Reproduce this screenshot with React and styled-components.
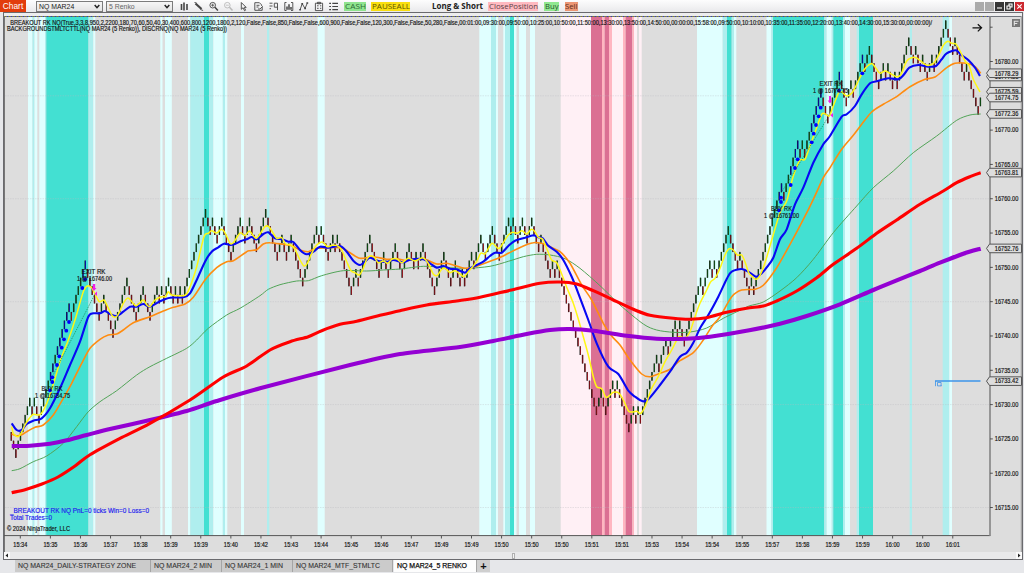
import React from "react";
import styled, { createGlobalStyle } from "styled-components";

const HEADER_TEXT =
  "_BREAKOUT RK NQ(True,3,3,8,950,2,2200,180,70,60,50,40,30,400,600,800,1200,1800,2,120,False,False,850,False,False,600,900,False,False,120,300,False,False,50,280,False,00:01:00,09:30:00,09:50:00,10:25:00,10:50:00,11:50:00,13:30:00,13:50:00,14:50:00,00:00:00,15:58:00,09:50:00,10:10:00,10:35:00,11:35:00,12:20:00,13:40:00,14:30:00,15:30:00,00:00:00)/";

const COLORS = {
  light: "#e0ffff",
  pale: "#afeeee",
  turq: "#43e0d2",
  blush: "#fff0f5",
  pink: "#ffb6c1",
  violet: "#db7093",
};

// background bands: [from, to, color]
const bands = [
  [28, 32.5, "light"], [32.5, 34.5, "pale"], [34.5, 37.3, "light"],
  [39.3, 45, "light"], [45, 46.3, "pale"], [46.3, 88.5, "turq"], [88.5, 93.3, "pale"], [93.3, 95.3, "light"],
  [160.3, 162.5, "light"], [165, 171.8, "light"],
  [188, 190.3, "light"], [190.3, 204, "pale"], [204, 209, "turq"], [209, 213.3, "pale"],
  [213.3, 222.8, "light"], [222.8, 225, "pale"], [225, 227.3, "light"],
  [241, 244, "light"], [267, 269.3, "pale"], [317.6, 324.7, "light"],
  [479.3, 491, "light"], [491, 496, "pale"], [496, 498, "light"],
  [503.3, 505, "light"], [505, 510, "pale"], [510, 514, "turq"], [514, 516.5, "light"],
  [519, 526, "light"], [530, 535, "light"],
  [560.7, 591, "blush"], [591, 602, "violet"], [602, 604.7, "pink"], [604.7, 609, "violet"],
  [609, 612, "pink"], [612, 623, "blush"], [623, 625.7, "pink"], [625.7, 632.3, "violet"],
  [632.3, 634, "pink"], [634, 637, "blush"], [639, 641.7, "blush"],
  [697, 722.7, "light"], [722.7, 727, "pale"], [727, 731.7, "turq"], [731.7, 734, "pale"], [734, 736.3, "light"],
  [766.5, 771.3, "light"], [771.3, 773, "pale"], [773, 824.3, "turq"], [824.3, 826.7, "pale"],
  [826.7, 831.7, "light"], [831.7, 833.3, "pale"], [833.3, 843, "turq"], [843, 845, "pale"],
  [845, 850, "light"], [856.7, 859, "pale"], [859, 873, "turq"],
  [909.7, 912, "pale"], [942.7, 949.3, "pale"], [949.3, 952, "light"],
];

// renko turning points, in bricks
const swings = [
  9, 7, 13, 12, 13, 11, 24, 23, 29, 23, 25, 21, 27, 23, 26, 23, 26, 25, 26, 25, 27, 25, 26, 25, 26, 25,
  35, 33, 34, 32, 34, 30, 34, 32, 34, 31, 35, 30, 32, 30, 32, 27, 33, 32, 33, 30, 32, 31, 32, 26, 28, 27,
  32, 28, 30, 28, 31, 28, 31, 29, 30, 29, 31, 26, 30, 27, 29, 27, 28, 27, 30, 29, 32, 30, 33, 30,
  34, 33, 34, 32, 34, 32, 34, 31, 32, 28, 29, 28, 29, 12, 14, 12, 15, 14, 15, 10, 12, 11, 12, 11,
  18, 17, 20, 19, 22, 21, 22, 20, 27, 26, 29, 28, 29, 28, 33, 29, 30, 26, 27, 26,
  38, 37, 43, 42, 43, 42, 49, 46, 51, 48, 50, 49, 53, 52, 54, 50, 52, 51, 52, 50, 51, 50,
  55, 53, 54, 52, 53, 51, 53, 52, 57, 54, 55, 51, 52, 47, 48,
];

const signalBars = [17, 18, 20, 21, 22, 23, 24, 25, 31, 32, 332, 333, 337, 339, 340, 346, 347, 348, 349, 350, 358, 368];

const buildBars = () => {
  const bars = [{ level: swings[0], up: false }];
  for (let i = 1; i < swings.length; i++) {
    const up = swings[i] > swings[i - 1];
    let level = swings[i - 1];
    while (level !== swings[i]) {
      level += up ? 1 : -1;
      bars.push({ level, up });
    }
  }
  return bars;
};

const bars = buildBars();
const BRICK = 8.577;
const barStep = (980.4 - 11.2) / (bars.length - 1);

// every curve is a list of [originX, originY, points], points in thirds of a pixel
const curves = {
  green: [
    [0, 200, "35,812 60,806 100,785 140,768 190,730 230,680 265,635 300,605 350,572 410,525 450,500 500,475 560,445 590,420 625,385 680,345 720,325"],
    [250, 200, "30,287 55,268 90,254 140,243 175,242 215,227 280,212 350,213 400,210 450,207 520,199 580,202 650,205 720,199 775,184"],
    [460, 200, "190,170 230,163 270,165 315,176 360,205 420,257 480,315 550,372 590,390 640,397 690,396 740,384 790,355 850,326"],
    [680, 16, "210,869 250,858 300,825 350,785 400,730 460,650 530,570 580,515 640,465 700,410 770,360 830,313 870,297 902,294"],
  ],
  orange: [
    [0, 200, "35,702 50,707 65,704 80,695 105,682 130,675 160,645 190,595 215,550 245,490 270,445 300,418 325,405 350,402 370,390 400,368 450,350 490,333 520,322 555,312 580,292 615,240 650,203 680,185 700,182 740,155"],
    [250, 200, "0,152 20,149 40,132 60,128 100,133 125,137 150,150 175,155 200,145 270,143 295,155 330,175 370,170 410,178 440,176 470,182 490,178 525,178 560,192 590,190 640,204 665,203 690,195 730,180 760,168"],
    [460, 200, "145,160 185,140 220,128 245,130 265,138 300,155 330,190 365,255 395,300 430,370 455,408 480,435 510,480 545,522 570,530 600,520 630,508 660,482 700,458 730,420 755,380 780,350"],
    [680, 16, "155,842 185,822 225,820 250,808 290,755 330,685 370,610 400,550 430,485 450,455 485,400 520,358 545,325 575,288 610,265 650,242 690,212 735,190 765,183 800,155 825,142 860,142 885,152 902,172"],
  ],
  blue: [
    [0, 200, "35,670 50,690 65,690 80,672 100,662 125,655 150,625 180,565 210,495 240,425 265,350 280,340 300,340 315,333 330,342 350,348 370,335 390,320 410,320 430,312 450,320 480,304 510,293 550,292 570,280 590,240 615,185 635,155 655,142 672,131 690,135 705,132 725,122 740,118"],
    [250, 200, "5,111 20,118 40,102 55,97 75,115 95,118 115,125 130,126 150,150 170,163 190,155 210,140 235,143 270,138 290,155 310,182 330,195 345,185 360,173 385,183 410,186 430,180 460,187 480,179 520,178 540,190 560,203 580,198 600,206 620,208 645,218 660,205 680,195 700,185 720,168 735,158 755,158"],
    [460, 200, "145,138 165,122 195,113 220,106 235,112 248,115 265,137 290,155 310,180 335,230 355,280 385,360 410,430 445,500 475,522 505,572 525,590 548,604 565,598 600,555 630,515 660,470 680,458 700,428 720,385 745,345 775,290 800,237 815,215 845,207 868,217"],
    [680, 16, "228,782 245,772 262,752 280,725 300,670 320,640 345,565 370,515 400,440 430,385 450,360 485,302 500,295 525,270 545,235 570,202 590,196 625,187 655,190 670,178 688,155 715,147 745,152 768,150 785,130 800,112 828,103 845,118 865,132 885,155 900,180"],
  ],
  yellow: [
    [0, 200, "35,680 40,700 54,710 63,700 75,675 88,655 100,643 118,645 130,632 150,585 180,485 205,420 228,350 250,275 262,258 275,264 285,282 298,305 312,300 322,318 335,345 345,352 355,343 370,310 384,294 398,308 408,318 420,308 430,300 440,314 450,320 465,300 485,290 497,290 505,275 515,285 555,286 570,260 590,200 612,110 625,100 635,92 650,99 664,88 676,100 690,130 700,128 712,110 722,98 735,107 748,93"],
    [250, 200, "10,107 19,115 30,102 45,80 56,80 70,100 80,115 95,113 107,132 122,135 135,148 150,180 162,198 172,190 185,160 200,135 217,126 232,140 247,136 262,137 275,150 290,185 303,212 315,218 328,225 340,205 350,178 362,167 373,172 385,188 400,183 413,190 425,178 440,176 455,188 475,175 495,183 518,173 535,190 550,222 562,226 575,208 585,205 600,218 615,212 630,222 642,230 655,215 668,200 680,185 692,160 705,162 715,145 727,130 740,142 748,145"],
    [460, 200, "132,125 145,105 158,97 172,100 186,92 200,102 214,88 225,95 235,112 248,118 262,150 275,180 290,188 305,222 320,262 340,310 360,375 385,465 400,530 410,560 425,566 438,592 450,585 460,577 475,578 490,600 505,632 515,636 530,634 542,640 555,620 575,565 595,530 615,485 635,450 655,412 665,411 676,414 690,395 705,350 720,310 740,270 752,245 765,235 780,205 795,165 808,146 820,150 832,165 845,165 856,188 866,218"],
    [680, 16, "215,780 228,790 240,778 255,740 270,690 300,590 320,555 340,480 360,433 375,430 390,390 410,335 425,295 435,293 448,300 460,270 475,232 485,228 500,240 515,232 530,205 550,165 565,148 577,143 590,160 600,172 615,165 630,172 650,182 663,175 680,135 695,125 708,125 722,135 735,145 748,148 762,140 775,120 790,88 803,76 815,82 828,84 840,105 855,135 868,150 880,190 900,228"],
  ],
  purple: [
    [0, 200, "35,738 90,737 150,731 200,721 260,705 330,687 450,660 560,633 650,603 780,565 1050,495 1200,462"],
    [460, 200, "0,441 100,423 200,402 270,390 330,387 400,392 500,407 590,416 680,416 750,410 868,391"],
    [680, 16, "300,923 380,900 480,865 580,822 650,793 720,765 780,740 850,713 902,698"],
  ],
  red: [
    [0, 200, "35,878 75,869 126,852 174,831 225,798 270,764 360,715 450,670 570,600 670,531 740,498"],
    [250, 200, "60,450 120,425 175,410 215,392 270,373 320,364 390,346 450,332 530,315 620,303"],
    [460, 200, "60,292 150,271 240,250 300,246 350,252 400,272 460,300 520,328 570,346 640,355 690,358 740,353 800,337 860,325"],
    [680, 16, "250,870 290,855 350,825 410,785 460,745 530,697 590,652 650,612 720,565 790,525 830,500 870,482 902,470"],
  ],
};

const curvePath = (segments) => {
  const pts = segments.flatMap(([ox, oy, list]) =>
    list.split(" ").map((pair) => {
      const [x, y] = pair.split(",").map(Number);
      return [ox + x / 3, oy + y / 3];
    })
  );
  let d = `M${pts[0][0].toFixed(1)} ${pts[0][1].toFixed(1)}`;
  for (let i = 0; i < pts.length - 1; i++) {
    const p0 = pts[i - 1] || pts[i];
    const p1 = pts[i];
    const p2 = pts[i + 1];
    const p3 = pts[i + 2] || p2;
    const c = [
      p1[0] + (p2[0] - p0[0]) / 7,
      p1[1] + (p2[1] - p0[1]) / 7,
      p2[0] - (p3[0] - p1[0]) / 7,
      p2[1] - (p3[1] - p1[1]) / 7,
      p2[0],
      p2[1],
    ].map((n) => n.toFixed(1));
    d += `C${c.join(" ")}`;
  }
  return d;
};

const dots = [
  [50, 390.3], [52.3, 382], [52.3, 377.3], [57, 365], [59.3, 356.3], [61.7, 347.7], [64, 339.3], [66.3, 330.7],
  [69, 322], [82.3, 288], [85, 279.3], [779, 210.3], [781, 202], [781, 197.7], [790.7, 185], [795, 168],
  [797.7, 159.3], [811.7, 142.3], [813.7, 133.7], [816, 125], [818.7, 116.3], [820.7, 107.7], [839, 90.7], [862.3, 73.3],
];

const tradeNotes = [
  { x: 93.5, y: 274.4, w: 24, text: "EXIT RK" },
  { x: 94.5, y: 281, w: 35, text: "1 @ 16746.00" },
  { x: 52, y: 391.2, w: 21, text: "BUY RK" },
  { x: 52.5, y: 397.7, w: 35, text: "1 @ 16734.75" },
  { x: 831, y: 86, w: 23, text: "EXIT RK" },
  { x: 830.5, y: 92.5, w: 35, text: "1 @ 16774.75" },
  { x: 781.5, y: 211.4, w: 21, text: "BUY RK" },
  { x: 781.5, y: 217.9, w: 35, text: "1 @ 16761.00" },
];

const times = [
  "15:34", "15:35", "15:36", "15:37", "15:38", "15:39", "15:39", "15:40", "15:42", "15:43", "15:44",
  "15:45", "15:46", "15:47", "15:49", "15:49", "15:50", "15:50", "15:50", "15:51", "15:51", "15:53",
  "15:54", "15:54", "15:55", "15:57", "15:58", "15:59", "15:59", "16:00", "16:00", "16:01",
];

const priceY = (p) => 61.5 + (16780 - p) * 6.862;
const prices = [16780, 16775, 16770, 16765, 16760, 16755, 16750, 16745, 16740, 16735, 16730, 16725, 16720, 16715];
const markers = [16777.81, 16778.29, 16775.59, 16774.75, 16772.36, 16763.81, 16752.76, 16733.42];

const tabs = [
  { label: "NQ MAR24_DAILY-STRATEGY ZONE", width: 136, text: 118 },
  { label: "NQ MAR24_2 MIN", width: 71, text: 58 },
  { label: "NQ MAR24_1 MIN", width: 71, text: 58 },
  { label: "NQ MAR24_MTF_STMLTC", width: 100, text: 84 },
  { label: "NQ MAR24_5 RENKO", width: 83, text: 70, active: true },
];

const Label = ({ size, color, ...rest }) => (
  <LabelText lengthAdjust="spacingAndGlyphs" $size={size} $color={color} {...rest} />
);

const Chart = () => (
  <ChartSvg viewBox="4 16 1018 536" width="1018" height="536">
    <rect x="4" y="16" width="1018" height="536" fill="#dddddd" />
    {bands.map(([from, to, color]) => (
      <rect key={from} x={from} y="16" width={to - from} height="519.5" fill={COLORS[color]} />
    ))}
    {[16775, 16760, 16745, 16730, 16715].map((p) => (
      <line key={p} x1="5" x2="989" y1={priceY(p)} y2={priceY(p)} stroke="#b8b8c0" strokeOpacity=".5" strokeWidth=".7" strokeDasharray="1.5 1" />
    ))}

    {bars.map((bar, i) => {
      const x = 11.2 + i * barStep;
      const y = 509.2 - BRICK * bar.level;
      const fill = signalBars.includes(i) ? "#0000c8" : bar.up ? "#0a5a10" : "#a80c14";
      return (
        <g key={i}>
          <rect x={x - 0.7} y={y} width="1.35" height={BRICK + 0.2} fill="#1c1c1c" />
          <rect x={x - 0.1} y={y + 0.4} width=".75" height={BRICK - 0.6} fill={fill} />
        </g>
      );
    })}

    <Curve d={curvePath(curves.green)} stroke="#52a458" strokeWidth="1" />
    <Curve d={curvePath(curves.orange)} stroke="#ff8c10" strokeWidth="1.6" />
    <Curve d={curvePath(curves.blue)} stroke="#0808f4" strokeWidth="2.1" />
    <Curve d={curvePath(curves.yellow)} stroke="#fff714" strokeWidth="1.5" />
    <Curve d={curvePath(curves.purple)} stroke="#9400d3" strokeWidth="4.1" />
    <Curve d={curvePath(curves.red)} stroke="#ff0000" strokeWidth="3.1" />
    <path d="M51 379L95 294M781 193L827 119" stroke="#158a50" strokeWidth=".7" strokeDasharray="1.5 1" fill="none" />

    {dots.map(([x, y]) => (
      <circle key={`${x}-${y}`} cx={x} cy={y} r="1.9" fill="#0000ff" />
    ))}
    <g fill="#f020e8">
      <path d="M92.8 284h2.4v4h1.3l-2.5 3-2.5-3h1.3z" />
      <path d="M97 291.5v4.5l-2.5-2.2z" />
      <path d="M829 96h2v4.5h1.2l-2.2 3-2.4-3h1.4z" />
      <path d="M833 113v4.6l-2.7-2.3z" />
    </g>
    {tradeNotes.map((note) => (
      <Label key={`${note.x}-${note.y}`} x={note.x} y={note.y} textAnchor="middle" textLength={note.w}>
        {note.text}
      </Label>
    ))}

    <path d="M935 381H980.5" stroke="#3b94ea" strokeWidth="1.7" />
    <g fill="none" stroke="#3b94ea" strokeWidth=".8">
      <path d="M935.5 381v5.2M937.5 382.5v3.4h4l-1-1M937.5 382.5h3.6v3" />
    </g>

    <path d="M4 16.3H1021" stroke="#565a64" strokeWidth="1" />
    <path d="M5 16.5H989" stroke="#8c9400" strokeWidth=".8" strokeDasharray="1 3" />
    <path d="M7 16.5H989" stroke="#3434b8" strokeWidth=".8" strokeDasharray="1 3" />
    <Label x="7" y="24.7" textLength="925">{HEADER_TEXT}</Label>
    <Label x="7" y="31.2" textLength="220">BACKGROUNDSTMLTCTTL(NQ MAR24 (5 Renko)), DISCRNQ(NQ MAR24 (5 Renko))</Label>
    <path d="M972.5 27.8H981M977.8 24.2l3.8 3.6-3.8 3.6" fill="none" stroke="#111" strokeWidth="1.2" />
    <Label x="10" y="512.5" textLength="139" size="7" color="#2222ee">_BREAKOUT RK NQ PnL=0 ticks Win=0 Loss=0</Label>
    <Label x="10" y="520" textLength="42" size="7" color="#2222ee">Total Trades=0</Label>
    <Label x="7" y="531" textLength="63">© 2024 NinjaTrader, LLC</Label>

    <path d="M4.5 16V552" stroke="#777" strokeWidth="1" />
    <path d="M4 535.6H990.2" stroke="#555" strokeWidth="1" />
    <path d="M990 16V536" stroke="#858585" strokeWidth="1.6" />
    <path d="M1021.3 16V552" stroke="#9a9a9a" strokeWidth="1" />
    {times.map((time, i) => (
      <g key={i}>
        <path d={`M${20.3 + i * 30.08} 536v2.5`} stroke="#444" strokeWidth=".9" />
        <Label x={20.3 + i * 30.08} y="547.4" textAnchor="middle" textLength="14">{time}</Label>
      </g>
    ))}
    <path d="M990 27.2h2.6" stroke="#444" strokeWidth=".9" />
    {prices.map((p) => (
      <g key={p}>
        <path d={`M990 ${priceY(p)}h2.8`} stroke="#444" strokeWidth=".9" />
        <Label x="994.8" y={priceY(p) + 2.3} textLength="23.5">{`${p}.00`}</Label>
      </g>
    ))}
    {markers.map((p) => {
      const y = priceY(p);
      return (
        <g key={p}>
          <path d={`M986.5 ${y}l3-4.3h32v8.6h-32z`} fill="#dddddd" stroke="#555" strokeWidth="1" />
          <Label x="994.8" y={y + 2.3} textLength="23.5">{p.toFixed(2)}</Label>
        </g>
      );
    })}
    <rect x="1012" y="19" width="8" height="8" fill="#777" />
    <path d="M1014.3 25.8v-4.6h4.2M1014.3 23.5h3" stroke="#e4e4e4" strokeWidth="1.1" fill="none" />
  </ChartSvg>
);

const ToolIcons = () => (
  <IconStrip viewBox="178 0 164 13" width="164" height="13">
    <g fill="none" stroke="#454545" strokeWidth=".9">
      <path d="M181.5 4v6M184 2.5v8M187 4v6" strokeWidth="1.6" />
      <path d="M195.5 3.5l6 5.5" strokeWidth="2.2" />
      <path d="M194.5 2.5l2 .4M200.5 9.5l2.6 1" />
      <circle cx="212.7" cy="5.2" r="2.8" />
      <path d="M214.9 7.2l3 3.2" strokeWidth="1.5" />
      <path d="M211.2 5.2h3M212.7 3.7v3" strokeWidth=".8" />
      <g stroke="#b9b9b9">
        <circle cx="227.3" cy="5.2" r="2.8" />
        <path d="M229.5 7.2l3 3.2" strokeWidth="1.5" />
        <path d="M225.8 5.2h3" strokeWidth=".8" />
      </g>
      <path d="M241.3 2.5v6.8l1.7-1.5 1.6 3 1-.6-1.4-2.8h2z" />
      <path d="M254.8 2.7h4.6l2.2 2.2v1M254.8 2.7v7.6h7.4V7M256.5 5.3h3M256.5 7h2M258 9h2l2.8-2.8" />
      <path d="M269.5 3.2h3M269.5 6h3M269.5 8.7h1.5M274.3 3.2h3.2v7M274.3 3.2v4h3" />
      <path d="M286.5 2.5h-1.7v8h1.7M291 2.5h1.8v8H291" />
      <path d="M287 9.8V6.5M289 9.8V4.2M291 9.8V7" strokeWidth="1.5" />
      <path d="M300 10l2.2-6.3 2.8 4.8 2.3-5.4" />
      <path d="M299.3 9.7h1.6M301.4 3.7h1.7M304.3 8.4H306M306.4 3h1.8" strokeWidth="1.6" />
      <path d="M315.4 3.2h7.2v7.4h-7.2zM317.5 2.3h3v1.5h-3zM317 5.8h1.6M320 5.8h1.3M317 8.3h1.6M320 8.3h1.3" />
      <path d="M329.2 3.3h1.8M332.3 3.3h5.7M329.2 6.5h1.8M332.3 6.5h5.7M329.2 9.7h1.8M332.3 9.7h5.7" strokeWidth="1.2" />
    </g>
  </IconStrip>
);

const Fit = ({ width, bold, color = "#222", children }) => (
  <FitSvg width={width} height="11">
    <FitText x="0" y="8.3" textLength={width} lengthAdjust="spacingAndGlyphs" $bold={bold} fill={color}>
      {children}
    </FitText>
  </FitSvg>
);

const App = () => (
  <>
    <GlobalStyle />
    <Window>
      <TopBar>
        <ChartBadge>Chart</ChartBadge>
        <Select $gap={10}>
          NQ MAR24
          <Chevron viewBox="0 0 6 5"><path d="M.7 1l2.3 2.7L5.3 1" /></Chevron>
        </Select>
        <Select $gap={3} $dim>
          5 Renko
          <Chevron viewBox="0 0 6 5"><path d="M.7 1l2.3 2.7L5.3 1" /></Chevron>
        </Select>
        <ToolIcons />
        <Command $gap={2} $bg="#8fe48f"><Fit width={21} color="#2c6a34">CASH</Fit></Command>
        <Command $gap={5} $bg="#f9df10"><Fit width={38} color="#5d5400">PAUSEALL</Fit></Command>
        <Command $gap={21}><Fit width={51} bold>Long &amp; Short</Fit></Command>
        <Command $gap={5} $bg="#ffb9c0"><Fit width={49} color="#5a4246">ClosePosition</Fit></Command>
        <Command $gap={6} $bg="#90e890"><Fit width={13.5} color="#27502b">Buy</Fit></Command>
        <Command $gap={6} $bg="#ec9674"><Fit width={12.5} color="#5b2e18">Sell</Fit></Command>
        <WindowButtons>
          <WindowButton $bg="#ababab" />
          <WindowButton $bg="#ababab" />
          <WindowButton $bg="#363636"><svg viewBox="0 0 9 9"><path d="M2 6h5" /></svg></WindowButton>
          <WindowButton $bg="#363636"><svg viewBox="0 0 9 9"><path d="M2 4h3v3H2zM4 4V2h3v3H5" /></svg></WindowButton>
          <WindowButton $bg="#cc2930"><svg viewBox="0 0 9 9"><path d="M2.3 2.3l4.4 4.4M6.7 2.3L2.3 6.7" /></svg></WindowButton>
        </WindowButtons>
      </TopBar>
      <ChartFrame>
        <Chart />
        <ScrollBar>
          <ScrollArrow viewBox="0 0 6 6"><path d="M4 1v4L1.5 3z" /></ScrollArrow>
          <ScrollThumb />
          <ScrollArrow viewBox="0 0 6 6"><path d="M2 1v4l2.5-2z" /></ScrollArrow>
        </ScrollBar>
      </ChartFrame>
      <TabBar>
        {tabs.map((tab) => (
          <Tab key={tab.label} $width={tab.width} $active={tab.active}>
            <Fit width={tab.text} color={tab.active ? "#111" : "#333"}>{tab.label}</Fit>
          </Tab>
        ))}
        <AddTab>+</AddTab>
      </TabBar>
    </Window>
  </>
);

const GlobalStyle = createGlobalStyle`
  body {
    margin: 0;
    overflow: hidden;
    background: #e6e7ea;
    font-family: "Liberation Sans", Arial, sans-serif;
  }
`;

const Window = styled.div`
  display: flex;
  flex-direction: column;
  width: 1024px;
  height: 573px;
  background: #e6e7ea;
`;

const TopBar = styled.div`
  display: flex;
  align-items: center;
  height: 12px;
  background: linear-gradient(#fdfdfd, #e9e9eb);
`;

const ChartBadge = styled.div`
  width: 26px;
  height: 12px;
  background: #e23c0c;
  color: #fff;
  font-size: 8.4px;
  line-height: 12.5px;
  text-align: center;
`;

const Select = styled.div`
  display: flex;
  align-items: center;
  justify-content: space-between;
  box-sizing: border-box;
  width: 67px;
  height: 11px;
  margin-left: ${({ $gap }) => $gap}px;
  padding: 0 2px 0 2px;
  border: 1px solid #7c7c7c;
  background: linear-gradient(#f6f6f6, #e4e4e4);
  color: ${({ $dim }) => ($dim ? "#666" : "#222")};
  font-size: 6.9px;
  line-height: 9px;
`;

const Chevron = styled.svg`
  width: 6px;
  height: 5px;
  path {
    fill: none;
    stroke: #222;
    stroke-width: 1.5;
  }
`;

const IconStrip = styled.svg`
  display: block;
  flex: none;
  margin-left: 5px;
`;

const Command = styled.div`
  height: 9px;
  margin-left: ${({ $gap }) => $gap}px;
  padding: 0 0.5px;
  background: ${({ $bg }) => $bg || "transparent"};
`;

const FitSvg = styled.svg`
  display: block;
  overflow: visible;
  margin-top: -1px;
`;

const FitText = styled.text`
  font-family: "Open Sans", "Noto Sans", sans-serif;
  font-size: 8px;
  font-weight: ${({ $bold }) => ($bold ? 700 : 400)};
`;

const WindowButtons = styled.div`
  display: flex;
  gap: 1px;
  margin-left: auto;
`;

const WindowButton = styled.div`
  width: 9px;
  height: 9px;
  background: ${({ $bg }) => $bg};
  svg {
    display: block;
    fill: none;
    stroke: #fff;
    stroke-width: 1.1;
  }
`;

const ChartFrame = styled.div`
  box-sizing: border-box;
  width: 1020px;
  height: 548px;
  margin-left: 3px;
  padding-top: 3px;
  border: 1px solid #6a6a6e;
  background: #ededee;
`;

const ChartSvg = styled.svg`
  display: block;
`;

const Curve = styled.path`
  fill: none;
  stroke-linejoin: round;
`;

const LabelText = styled.text`
  fill: ${({ $color }) => $color || "#161616"};
  stroke: ${({ $color }) => $color || "#161616"};
  stroke-width: 0.18px;
  font-family: "Liberation Sans", Arial, sans-serif;
  font-size: ${({ $size }) => $size || 6.4}px;
`;

const ScrollBar = styled.div`
  display: flex;
  align-items: center;
  justify-content: space-between;
  height: 7px;
  background: #e9e9ea;
`;

const ScrollArrow = styled.svg`
  width: 6px;
  height: 7px;
  background: #fafafa;
  path {
    fill: #222;
  }
`;

const ScrollThumb = styled.div`
  width: 3px;
  height: 6px;
  box-sizing: border-box;
  border: 1px solid #b0b0b0;
  background: #f4f4f4;
`;

const TabBar = styled.div`
  display: flex;
  height: 13px;
  padding-left: 15px;
`;

const Tab = styled.div`
  box-sizing: border-box;
  width: ${({ $width }) => $width}px;
  height: 12px;
  margin-left: ${({ $active }) => ($active ? 1 : 0)}px;
  padding: 1px 0 0 3px;
  border-right: 1px solid #a5a5a5;
  background: ${({ $active }) => ($active ? "#fdfdfd" : "#cbcbcb")};
  text {
    font-family: "Liberation Sans", Arial, sans-serif;
    font-size: 7.2px;
    stroke: ${({ $active }) => ($active ? "#111" : "#333")};
    stroke-width: ${({ $active }) => ($active ? 0.25 : 0.1)}px;
  }
`;

const AddTab = styled.div`
  width: 13px;
  height: 12px;
  background: #cfcfcf;
  color: #111;
  font-size: 11px;
  font-weight: 700;
  line-height: 12px;
  text-align: center;
`;

export default App;
